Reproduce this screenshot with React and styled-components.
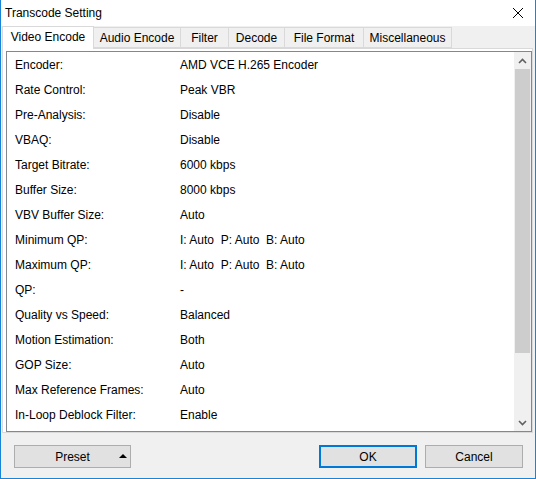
import React from 'react';
import styled, { createGlobalStyle } from 'styled-components';

const GlobalStyle = createGlobalStyle`
  html, body {
    margin: 0;
    padding: 0;
    background: #f0f0f0;
  }
  * {
    box-sizing: border-box;
  }
`;

const Window = styled.div`
  width: 536px;
  height: 479px;
  display: flex;
  flex-direction: column;
  border: 1px solid #1883d7;
  border-top: none;
  background: #f0f0f0;
  font-family: "Liberation Sans", Arial, sans-serif;
  font-size: 12px;
  color: #000;
`;

const TitleBar = styled.div`
  height: 26px;
  display: flex;
  align-items: center;
  justify-content: space-between;
  background: #fff;
  padding: 0 10px 0 4px;
`;

const Title = styled.span`
  font-size: 12px;
`;

const CloseButton = styled.div`
  width: 14px;
  height: 14px;
  display: flex;
  align-items: center;
  justify-content: center;
`;

const TabStrip = styled.div`
  display: flex;
  align-items: flex-end;
  height: 22px;
  padding-left: 1px;
  position: relative;
  z-index: 1;
`;

const Tab = styled.div`
  width: ${(p) => p.width}px;
  height: ${(p) => (p.active ? '23px' : '21px')};
  margin: ${(p) => (p.active ? '0 -1px -1px 0' : '0 -1px 0 0')};
  padding-top: 3px;
  text-align: center;
  background: ${(p) => (p.active ? '#fff' : '#f0f0f0')};
  border: 1px solid #d9d9d9;
  border-bottom: ${(p) => (p.active ? 'none' : '1px solid #d9d9d9')};
  white-space: nowrap;
  position: relative;
  z-index: ${(p) => (p.active ? 2 : 0)};
`;

const Panel = styled.div`
  flex: 0 0 384px;
  margin: 0 2px 0 1px;
  background: #fff;
  border: 1px solid #d9d9d9;
  padding: 2px 1px 0 3px;
`;

const ListBox = styled.div`
  height: 381px;
  width: 526px;
  display: flex;
  border: 1px solid #828790;
  background: #fff;
`;

const Rows = styled.div`
  flex: 1;
  overflow: hidden;
`;

const Row = styled.div`
  display: grid;
  grid-template-columns: 165px 1fr;
  height: 25px;
  align-items: center;
  padding-left: 8px;
  white-space: pre;
`;

const ScrollBar = styled.div`
  width: 17px;
  display: flex;
  flex-direction: column;
  background: #f0f0f0;
`;

const ScrollArrow = styled.div`
  height: 17px;
  display: flex;
  align-items: center;
  justify-content: center;
`;

const Thumb = styled.div`
  height: 284px;
  margin: 0 1px;
  background: #cdcdcd;
`;

const Footer = styled.div`
  flex: 1;
  display: flex;
  align-items: flex-start;
  padding: 12px 12px 0 13px;
`;

const Button = styled.div`
  width: ${(p) => p.width}px;
  height: 23px;
  display: flex;
  align-items: center;
  justify-content: center;
  position: relative;
  background: #e1e1e1;
  border: ${(p) => (p.primary ? '2px solid #0078d7' : '1px solid #adadad')};
  margin-left: ${(p) => p.gap || 0}px;
`;

const DropArrow = styled.span`
  position: absolute;
  right: 3px;
  top: 8px;
  width: 0;
  height: 0;
  border-left: 4px solid transparent;
  border-right: 4px solid transparent;
  border-bottom: 4px solid #000;
`;

const Spacer = styled.div`
  flex: 1;
`;

const tabs = [
  ['Video Encode', 92],
  ['Audio Encode', 88],
  ['Filter', 49],
  ['Decode', 57],
  ['File Format', 80],
  ['Miscellaneous', 89],
];

const settings = [
  ['Encoder:', 'AMD VCE H.265 Encoder'],
  ['Rate Control:', 'Peak VBR'],
  ['Pre-Analysis:', 'Disable'],
  ['VBAQ:', 'Disable'],
  ['Target Bitrate:', '6000 kbps'],
  ['Buffer Size:', '8000 kbps'],
  ['VBV Buffer Size:', 'Auto'],
  ['Minimum QP:', 'I: Auto  P: Auto  B: Auto'],
  ['Maximum QP:', 'I: Auto  P: Auto  B: Auto'],
  ['QP:', '-'],
  ['Quality vs Speed:', 'Balanced'],
  ['Motion Estimation:', 'Both'],
  ['GOP Size:', 'Auto'],
  ['Max Reference Frames:', 'Auto'],
  ['In-Loop Deblock Filter:', 'Enable'],
];

const Chevron = ({ up }) => (
  <svg width="9" height="6" viewBox="0 0 9 6">
    <path
      d={up ? 'M1 5 L4.5 1.5 L8 5' : 'M1 1 L4.5 4.5 L8 1'}
      fill="none"
      stroke="#606060"
      strokeWidth="1.6"
    />
  </svg>
);

const App = () => (
  <>
    <GlobalStyle />
    <Window>
      <TitleBar>
        <Title>Transcode Setting</Title>
        <CloseButton>
          <svg width="12" height="12" viewBox="0 0 12 12">
            <path d="M1 1 L11 11 M11 1 L1 11" stroke="#000" strokeWidth="1" />
          </svg>
        </CloseButton>
      </TitleBar>
      <TabStrip>
        {tabs.map(([t, w], i) => (
          <Tab key={t} width={w} active={i === 0}>{t}</Tab>
        ))}
      </TabStrip>
      <Panel>
        <ListBox>
          <Rows>
            {settings.map(([label, value]) => (
              <Row key={label}>
                <span>{label}</span>
                <span>{value}</span>
              </Row>
            ))}
          </Rows>
          <ScrollBar>
            <ScrollArrow><Chevron up /></ScrollArrow>
            <Thumb />
            <Spacer />
            <ScrollArrow><Chevron /></ScrollArrow>
          </ScrollBar>
        </ListBox>
      </Panel>
      <Footer>
        <Button width={117}>
          Preset
          <DropArrow />
        </Button>
        <Spacer />
        <Button width={98} primary>OK</Button>
        <Button width={98} gap={8}>Cancel</Button>
      </Footer>
    </Window>
  </>
);

export default App;
